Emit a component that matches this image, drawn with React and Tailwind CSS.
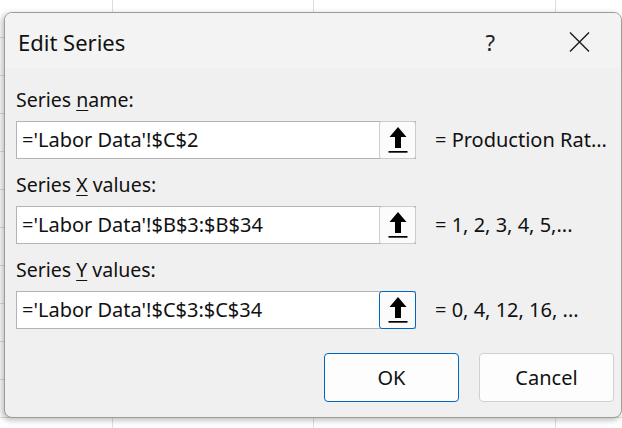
import React from 'react';

const font = { fontFamily: '"Noto Sans", "Open Sans", sans-serif' };

// Range-picker arrow drawn inside each reference box
const CollapseArrow = () => (
    <svg width="22" height="28" viewBox="0 0 22 28">
        <polygon points="11,1 19.5,11 14,11 14,22 8,22 8,11 2.5,11" fill="#000" />
        <rect x="1.5" y="25" width="19" height="1.7" fill="#000" />
    </svg>
);

const SeriesField = ({ accessKey, before, after, value, preview, focused }) => (
    <div className="flex flex-col">
        <div className="h-[24px] leading-[24px] text-[19.5px] text-[#111]">
            {before}<span className="underline underline-offset-[3px] decoration-1">{accessKey}</span>{after}
        </div>
        <div className="flex items-center mt-[9px]">
            <div className="flex w-[400px] h-[38px] bg-white border border-[#b3b3b3]">
                <div className="flex-1 pl-[5px] leading-[36px] text-[20px] text-[#111] whitespace-nowrap overflow-hidden">{value}</div>
                <button
                    className={
                        focused
                            ? 'flex items-center justify-center w-[37px] -my-px -mr-px h-[38px] bg-[#fbfbfb] border border-[#0067c0] rounded-[3px]'
                            : 'flex items-center justify-center w-[37px] -my-px -mr-px h-[38px] bg-[#fbfbfb] border border-[#cccccc] rounded-[3px]'
                    }
                >
                    <CollapseArrow />
                </button>
            </div>
            <div className="ml-[19px] text-[20px] text-[#111] whitespace-nowrap">{preview}</div>
        </div>
    </div>
);

const App = () => {
    return (
        <div
            className="w-[622px] h-[428px] overflow-hidden pt-[12px] pl-[4px] bg-white bg-[repeating-linear-gradient(to_bottom,transparent_0,transparent_37px,#dedede_37px,#dedede_38px),linear-gradient(to_right,transparent_112px,#dedede_112px,#dedede_113px,transparent_113px,transparent_313px,#dedede_313px,#dedede_314px,transparent_314px,transparent_555px,#dedede_555px,#dedede_556px,transparent_556px)]"
            style={font}
        >
            <div className="w-[618px] h-[406px] flex flex-col rounded-[8px] border border-[#9c9c9c] bg-[#f0f0f0] overflow-hidden shadow-[-2px_2px_6px_rgba(0,0,0,0.28)]">
                {/* title bar */}
                <div className="h-[55px] shrink-0 flex items-center bg-[#f3f3f3] pl-[13px] pr-[31px]">
                    <div className="text-[22px] text-[#111] pt-[3px]">Edit Series</div>
                    <div className="ml-auto text-[22px] text-[#222] pt-[3px]">?</div>
                    <button className="ml-[73px] mt-[3px] w-[22px] h-[22px] flex items-center justify-center">
                        <svg width="21" height="20" viewBox="0 0 21 20">
                            <path d="M1 0.5 L20 19.5 M20 0.5 L1 19.5" stroke="#1a1a1a" strokeWidth="1.4" fill="none" />
                        </svg>
                    </button>
                </div>

                {/* fields */}
                <div className="flex flex-col gap-[14px] pt-[20px] pl-[11px]">
                    <SeriesField before="Series " accessKey="n" after="ame:" value="='Labor Data'!$C$2" preview="= Production Rat..." />
                    <SeriesField before="Series " accessKey="X" after=" values:" value="='Labor Data'!$B$3:$B$34" preview="= 1, 2, 3, 4, 5,..." />
                    <SeriesField before="Series " accessKey="Y" after=" values:" value="='Labor Data'!$C$3:$C$34" preview="= 0, 4, 12, 16, ..." focused />
                </div>

                {/* dialog buttons */}
                <div className="flex justify-end gap-[20px] mt-[24px] pr-[7px]">
                    <button className="w-[135px] h-[49px] rounded-[4px] border border-[#0067c0] bg-[#fdfdfd] text-[20px] text-[#111]">OK</button>
                    <button className="w-[135px] h-[49px] rounded-[4px] border border-[#d0d0d0] bg-[#fdfdfd] text-[20px] text-[#111]">Cancel</button>
                </div>
            </div>
        </div>
    );
};

export default App;
